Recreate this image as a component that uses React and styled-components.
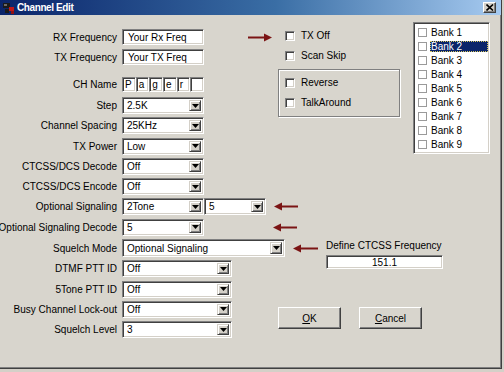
import React from 'react';
import styled, { createGlobalStyle } from 'styled-components';

const Global = createGlobalStyle`
  html, body { margin: 0; padding: 0; background: #d4d0c8; }
  body { font-family: "Liberation Sans", Arial, sans-serif; font-size: 10px; color: #000; }
`;

const Page = styled.div`
  width: 504px;
  height: 372px;
  overflow: hidden;
  background: #d4d0c8;
`;

const Dialog = styled.div`
  width: 502px;
  height: 369px;
  box-sizing: border-box;
  background: #d8d5cd;
  border-right: 1px solid #404040;
  border-bottom: 1px solid #404040;
  box-shadow: inset -1px -1px 0 #808080;
  display: flex;
  flex-direction: column;
  overflow: hidden;
`;

const TitleBar = styled.div`
  height: 15px;
  flex-shrink: 0;
  display: flex;
  align-items: center;
  padding-left: 2px;
  padding-right: 5px;
  background: linear-gradient(to right, #0a246a 0%, #3a6ea5 55%, #a6caf0 100%);
`;

const TitleText = styled.span`
  margin-left: 2px;
  color: #fff;
  font-weight: bold;
  font-size: 10px;
  letter-spacing: -0.4px;
`;

const CloseBtn = styled.div`
  margin-left: auto;
  width: 13px;
  height: 11px;
  box-sizing: border-box;
  background: #d4d0c8;
  border: 1px solid;
  border-color: #fff #404040 #404040 #fff;
  box-shadow: inset -1px -1px 0 #808080;
  display: flex;
  align-items: center;
  justify-content: center;
`;

const Body = styled.div`
  flex: 1;
  display: flex;
  padding-top: 7px;
`;

const LeftForm = styled.div`
  width: 278px;
  flex-shrink: 0;
  display: flex;
  flex-direction: column;
  padding-top: 7px;
`;

const Row = styled.div`
  display: grid;
  grid-template-columns: 117px auto;
  column-gap: 5px;
  align-items: center;
  height: ${p => p.$h || 17}px;
  margin-top: ${p => p.$mt ?? 3.3}px;
`;

const Label = styled.div`
  width: 117px;
  display: flex;
  justify-content: flex-end;
  white-space: nowrap;
`;

const Controls = styled.div`
  display: flex;
  align-items: center;
  height: 100%;
`;

const sunken = `
  box-sizing: border-box;
  background: #fff;
  border: 1px solid;
  border-color: #808080 #fff #fff #808080;
  box-shadow: inset 1px 1px 0 #404040, inset -1px -1px 0 #d4d0c8;
`;

const TextInput = styled.div`
  ${sunken}
  width: ${p => p.$w || 82}px;
  height: ${p => p.$h || 16}px;
  display: flex;
  align-items: center;
  justify-content: ${p => (p.$center ? 'center' : 'flex-start')};
  padding-left: ${p => (p.$center ? 0 : 5)}px;
  white-space: nowrap;
`;

const CharRow = styled.div`
  width: 82px;
  height: 15px;
  display: flex;
`;

const CharBox = styled.div`
  ${sunken}
  flex: 1;
  height: 100%;
  display: flex;
  align-items: center;
  padding-left: 2px;
`;

const SelectBox = styled.div`
  ${sunken}
  width: ${p => p.$w || 82}px;
  height: ${p => p.$h || 17}px;
  display: flex;
  align-items: center;
  padding: 2px 2px 2px 4px;
  white-space: nowrap;
`;

const DropBtn = styled.div`
  margin-left: auto;
  width: 12px;
  height: 100%;
  box-sizing: border-box;
  background: #d4d0c8;
  border: 1px solid;
  border-color: #d4d0c8 #404040 #404040 #d4d0c8;
  box-shadow: inset 1px 1px 0 #fff, inset -1px -1px 0 #808080;
  display: flex;
  align-items: center;
  justify-content: center;
  flex-shrink: 0;
`;

const ArrowWrap = styled.span`
  display: inline-flex;
  margin-left: ${p => p.$ml || 8}px;
`;

const RightArea = styled.div`
  flex: 1;
  display: flex;
  flex-direction: column;
`;

const TopRight = styled.div`
  display: flex;
`;

const Options = styled.div`
  width: 135px;
  flex-shrink: 0;
  display: flex;
  flex-direction: column;
  padding-top: 7px;
`;

const CheckRow = styled.div`
  display: flex;
  align-items: center;
  gap: 6px;
  height: 13px;
  padding-left: ${p => p.$pl ?? 7}px;
  margin-top: ${p => p.$mt || 0}px;
  white-space: nowrap;
`;

const Check = styled.span`
  ${sunken}
  width: 10px;
  height: 10px;
  flex-shrink: 0;
`;

const Group = styled.div`
  margin-top: 7px;
  width: 122px;
  height: 48px;
  box-sizing: border-box;
  border: 1px solid #808080;
  box-shadow: 1px 1px 0 #fff, inset 1px 1px 0 #fff;
  padding-top: 6px;
  display: flex;
  flex-direction: column;
`;

const BankList = styled.div`
  ${sunken}
  width: 77px;
  height: 132px;
  padding: 2px 1px 2px 2px;
  display: flex;
  flex-direction: column;
`;

const BankItem = styled.div`
  height: 14.2px;
  display: flex;
  align-items: center;
  gap: 3px;
  padding-left: 2px;
`;

const ListCheck = styled.span`
  width: 9px;
  height: 9px;
  box-sizing: border-box;
  border: 1px solid #9a9a9a;
  background: #fff;
  flex-shrink: 0;
`;

const BankText = styled.span`
  flex: 1;
  height: 11px;
  line-height: 11px;
  padding-left: 1px;
  white-space: nowrap;
  background: ${p => (p.$sel ? '#0a246a' : 'transparent')};
  color: ${p => (p.$sel ? '#fff' : '#000')};
  outline: ${p => (p.$sel ? '1px dotted #d8c860' : 'none')};
  outline-offset: -1px;
`;

const CtcssBlock = styled.div`
  margin-top: 86px;
  margin-left: 48px;
  display: flex;
  flex-direction: column;
  gap: 3px;
`;

const CtcssLabel = styled.div`
  line-height: 12px;
  white-space: nowrap;
`;

const Buttons = styled.div`
  margin-top: 38px;
  display: flex;
  gap: 18px;
`;

const Button = styled.div`
  width: 63px;
  height: 22px;
  box-sizing: border-box;
  background: #d8d5cd;
  border: 1px solid;
  border-color: #fff #404040 #404040 #fff;
  box-shadow: inset -1px -1px 0 #808080;
  display: flex;
  align-items: center;
  justify-content: center;
  u { text-decoration: underline; }
`;

const DownTri = () => (
  <svg width="7" height="4" viewBox="0 0 7 4"><polygon points="0,0 7,0 3.5,4" fill="#000" /></svg>
);

const Select = ({ value, w, h }) => (
  <SelectBox $w={w} $h={h}>
    <span>{value}</span>
    <DropBtn><DownTri /></DropBtn>
  </SelectBox>
);

const Arrow = ({ dir = 'left', ml, w = 24 }) => (
  <ArrowWrap $ml={ml}>
    <svg width={w} height="9" viewBox={`0 0 ${w} 9`}>
      {dir === 'right' ? (
        <>
          <line x1="0" y1="4.5" x2={w - 6} y2="4.5" stroke="#7b1414" strokeWidth="2" />
          <polygon points={`${w - 8},0.5 ${w},4.5 ${w - 8},8.5`} fill="#7b1414" />
        </>
      ) : (
        <>
          <line x1="6" y1="4.5" x2={w} y2="4.5" stroke="#7b1414" strokeWidth="2" />
          <polygon points="8,0.5 0,4.5 8,8.5" fill="#7b1414" />
        </>
      )}
    </svg>
  </ArrowWrap>
);

const AppIcon = () => (
  <svg width="13" height="13" viewBox="0 0 13 13">
    <rect x="1" y="2" width="7" height="5" fill="#1a1a1a" />
    <rect x="2" y="3" width="3" height="2" fill="#6a6a6a" />
    <rect x="7" y="6" width="5" height="4" fill="#c01818" />
    <rect x="3" y="8" width="4" height="4" fill="#1a1a1a" />
    <rect x="9" y="10" width="3" height="3" fill="#901010" />
  </svg>
);

const banks = ['Bank 1', 'Bank 2', 'Bank 3', 'Bank 4', 'Bank 5', 'Bank 6', 'Bank 7', 'Bank 8', 'Bank 9'];

const selectRows = [
  { label: 'Step', value: '2.5K', mt: 5 },
  { label: 'Channel Spacing', value: '25KHz' },
  { label: 'TX Power', value: 'Low' },
  { label: 'CTCSS/DCS Decode', value: 'Off' },
  { label: 'CTCSS/DCS Encode', value: 'Off' },
];

const lowerRows = [
  { label: 'DTMF PTT ID', value: 'Off' },
  { label: '5Tone PTT ID', value: 'Off' },
  { label: 'Busy Channel Lock-out', value: 'Off' },
  { label: 'Squelch Level', value: '3' },
];

export default function App() {
  return (
    <Page>
      <Global />
      <Dialog>
        <TitleBar>
          <AppIcon />
          <TitleText>Channel Edit</TitleText>
          <CloseBtn>
            <svg width="8" height="7" viewBox="0 0 8 7">
              <path d="M0.5 0.5 L7 6.5 M7 0.5 L0.5 6.5" stroke="#000" strokeWidth="1.6" />
            </svg>
          </CloseBtn>
        </TitleBar>
        <Body>
          <LeftForm>
            <Row $h={16} $mt={0}>
              <Label>RX Frequency</Label>
              <Controls>
                <TextInput>Your Rx Freq</TextInput>
                <Arrow dir="right" ml={44} />
              </Controls>
            </Row>
            <Row $h={16} $mt={4}>
              <Label>TX Frequency</Label>
              <Controls><TextInput>Your TX Freq</TextInput></Controls>
            </Row>
            <Row $h={15} $mt={12}>
              <Label>CH Name</Label>
              <Controls>
                <CharRow>
                  {['P', 'a', 'g', 'e', 'r', ''].map((c, i) => (
                    <CharBox key={i}>{c}</CharBox>
                  ))}
                </CharRow>
              </Controls>
            </Row>
            {selectRows.map(r => (
              <Row key={r.label} $mt={r.mt}>
                <Label>{r.label}</Label>
                <Controls><Select value={r.value} /></Controls>
              </Row>
            ))}
            <Row>
              <Label>Optional Signaling</Label>
              <Controls>
                <Select value="2Tone" />
                <Select value="5" w={62} />
                <Arrow ml={8} />
              </Controls>
            </Row>
            <Row>
              <Label>Optional Signaling Decode</Label>
              <Controls>
                <Select value="5" />
                <Arrow ml={69} />
              </Controls>
            </Row>
            <Row $h={18}>
              <Label>Squelch Mode</Label>
              <Controls>
                <Select value="Optional Signaling" w={163} h={18} />
                <Arrow ml={8} w={25} />
              </Controls>
            </Row>
            {lowerRows.map(r => (
              <Row key={r.label}>
                <Label>{r.label}</Label>
                <Controls><Select value={r.value} w={110} /></Controls>
              </Row>
            ))}
          </LeftForm>
          <RightArea>
            <TopRight>
              <Options>
                <CheckRow><Check />TX Off</CheckRow>
                <CheckRow $mt={7}><Check />Scan Skip</CheckRow>
                <Group>
                  <CheckRow $pl={6}><Check />Reverse</CheckRow>
                  <CheckRow $pl={6} $mt={7}><Check />TalkAround</CheckRow>
                </Group>
              </Options>
              <BankList>
                {banks.map((b, i) => (
                  <BankItem key={b}>
                    <ListCheck />
                    <BankText $sel={i === 1}>{b}</BankText>
                  </BankItem>
                ))}
              </BankList>
            </TopRight>
            <CtcssBlock>
              <CtcssLabel>Define CTCSS Frequency</CtcssLabel>
              <TextInput $w={117} $h={14} $center>151.1</TextInput>
            </CtcssBlock>
            <Buttons>
              <Button><span><u>O</u>K</span></Button>
              <Button><span><u>C</u>ancel</span></Button>
            </Buttons>
          </RightArea>
        </Body>
      </Dialog>
    </Page>
  );
}
